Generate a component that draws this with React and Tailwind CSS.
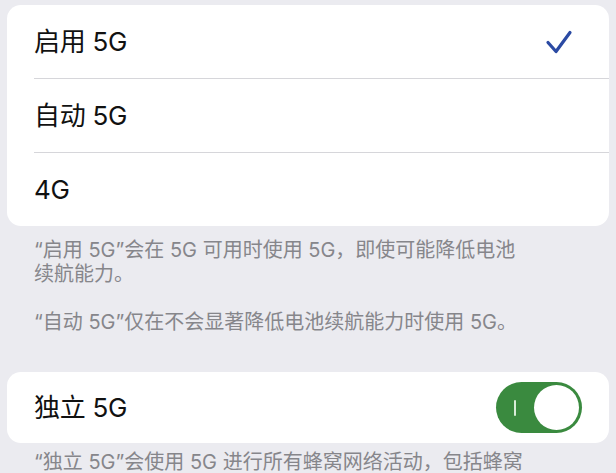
import React from "react";

const font = { fontFamily: '"Inter", "Noto Sans CJK SC", sans-serif' };

function Check() {
  return (
    <svg width="28" height="26" viewBox="0 0 28 26" fill="none">
      <path d="M3 13.5 L11 22.5 L25 3.5" stroke="#2b4aa3" strokeWidth="3.2" strokeLinecap="round" strokeLinejoin="round" />
    </svg>
  );
}

function Toggle() {
  return (
    <div className="relative w-[86px] h-[51px] rounded-full bg-[#3a8a3f] flex items-center">
      <div className="ml-[18px] w-[2px] h-[16px] bg-[#d8ecd8] rounded-full" />
      <div className="absolute right-[3px] top-[3px] w-[45px] h-[45px] rounded-full bg-white" />
    </div>
  );
}

export default function App() {
  return (
    <div
      className="w-[616px] h-[473px] overflow-hidden bg-[#ebebf0] pt-[5px] px-[7px]"
      style={font}
    >
      <div className="bg-white rounded-[14px] overflow-hidden">
        <div className="h-[73px] flex items-center justify-between pl-[27px] pr-[36px]">
          <span className="text-[26px] text-[#111] tracking-[-0.3px]">启用 5G</span>
          <Check />
        </div>
        <div className="ml-[27px] h-px bg-[#d6d6da]" />
        <div className="h-[73px] flex items-center pl-[27px]">
          <span className="text-[26px] text-[#111] tracking-[-0.3px]">自动 5G</span>
        </div>
        <div className="ml-[27px] h-px bg-[#d6d6da]" />
        <div className="h-[73px] flex items-center pl-[27px]">
          <span className="text-[26px] text-[#111] tracking-[-0.3px]">4G</span>
        </div>
      </div>

      <div className="pt-[12px] pl-[27px] text-[20px] leading-[24px] text-[#86868b] whitespace-nowrap">
        <p>
          “启用 5G”会在 5G 可用时使用 5G，即使可能降低电池
          <br />
          续航能力。
        </p>
        <p className="mt-[24px]">“自动 5G”仅在不会显著降低电池续航能力时使用 5G。</p>
      </div>

      <div className="mt-[38px] bg-white rounded-[14px] h-[71px] flex items-center justify-between pl-[27px] pr-[27px]">
        <span className="text-[26px] text-[#111] tracking-[-0.3px]">独立 5G</span>
        <Toggle />
      </div>

      <div className="pt-[7px] pl-[27px] text-[20px] leading-[24px] text-[#86868b] whitespace-nowrap">
        <p>
          “独立 5G”会使用 5G 进行所有蜂窝网络活动，包括蜂窝
          <br />
          数据、语音通话和信息。
        </p>
      </div>
    </div>
  );
}
